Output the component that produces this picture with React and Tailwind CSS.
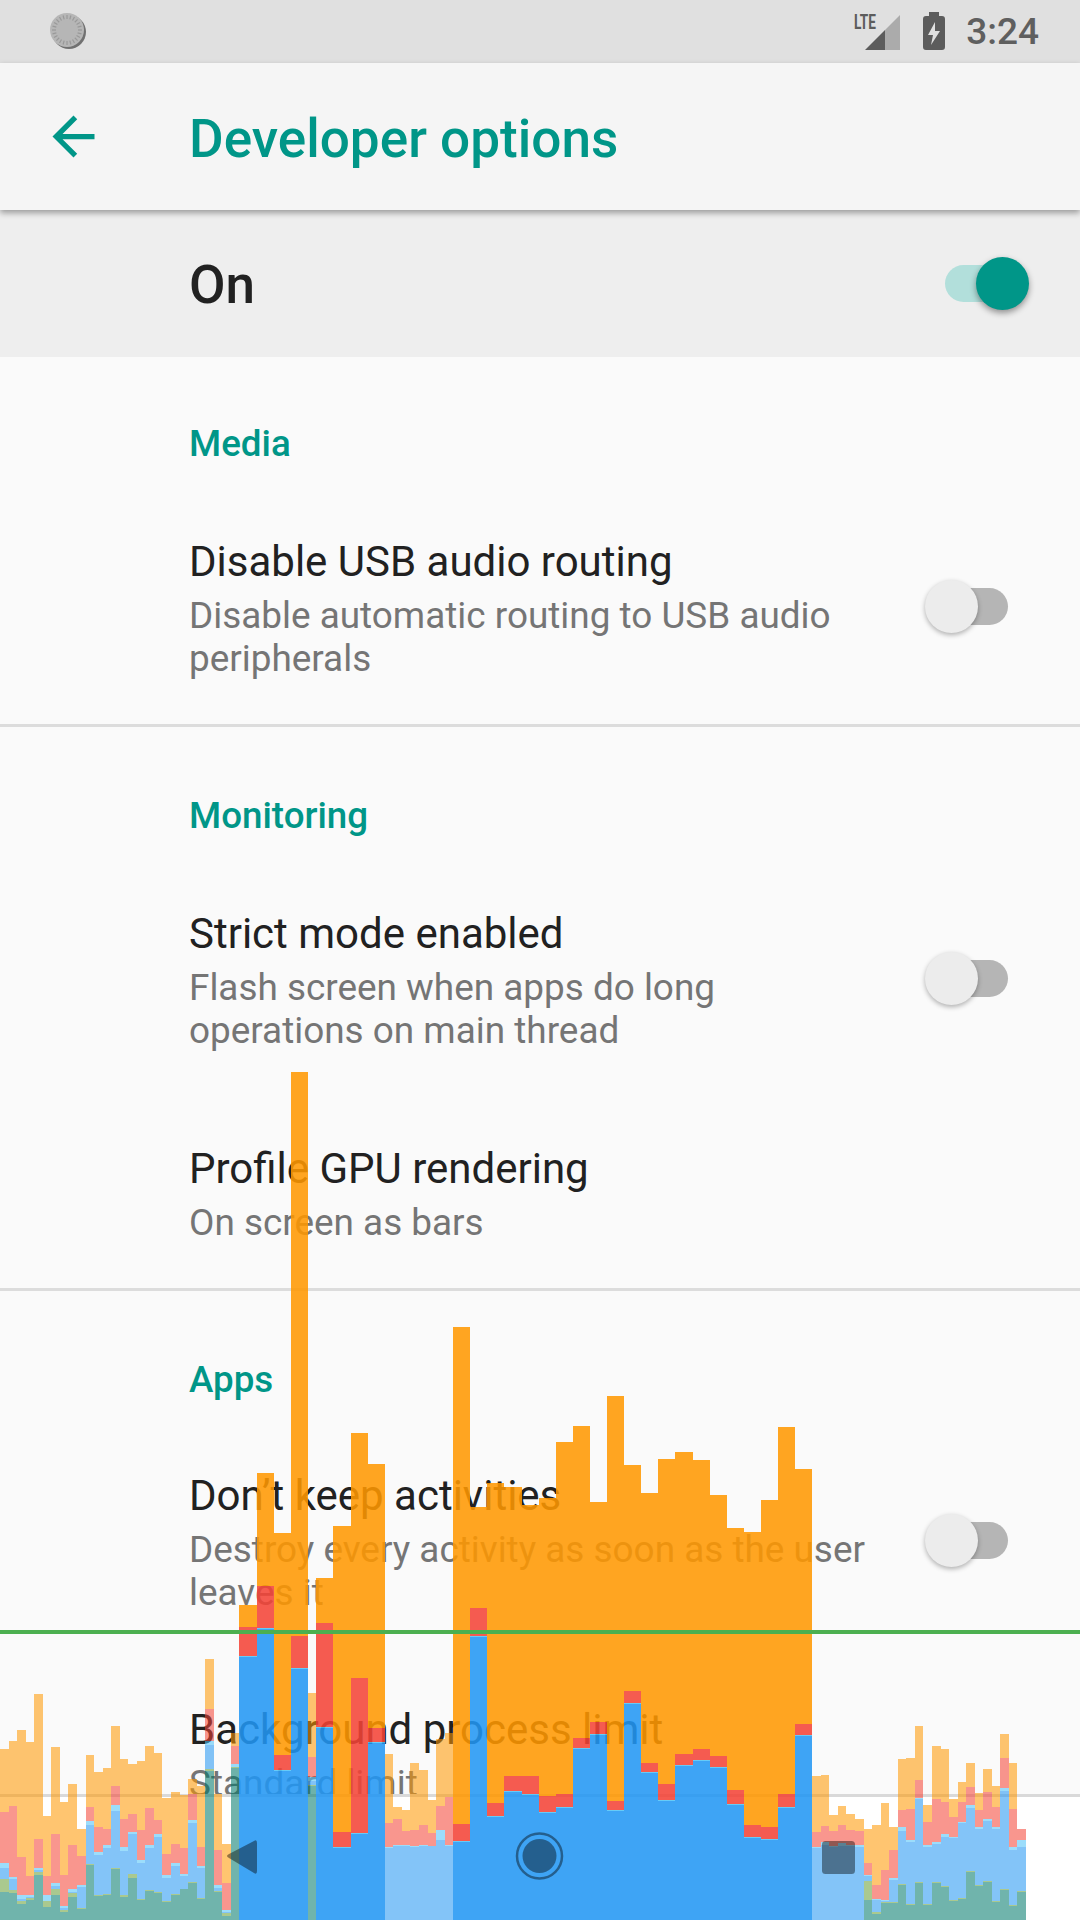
// Android "Developer options" screen with the Profile GPU rendering bars on top
const SLOT = 8.55;
const BASE = 1600; // all bar tops below are px offsets from this y
const BOTTOM = 320;

// [orange, red, sliver, blue, lime, teal] tops, faded frames
const LIGHT_RUNS = [
  [0, [
    [149, 212, 263, 268, 279, 292], [141, 206, 277, 279, 290, 293], [130, 257, 295, 299, 301, 304],
    [142, 276, 295, 297, 298, 300], [94, 239, 268, 270, 272, 275], [216, 276, 295, 301, 301, 307],
    [147, 234, 283, 286, 289, 295], [202, 275, 306, 308, 310, 312], [184, 245, 289, 292, 293, 297],
    [229, 256, 285, 287, 308, 309], [155, 207, 221, 225, 264, 265], [172, 227, 252, 255, 295, 296],
    [168, 229, 245, 248, 294, 295], [126, 186, 205, 211, 268, 269], [159, 219, 247, 251, 295, 297],
    [164, 214, 232, 234, 274, 278], [161, 230, 260, 263, 299, 300], [146, 208, 245, 248, 290, 291],
    [153, 220, 234, 237, 292, 293], [198, 254, 275, 278, 301, 302], [192, 244, 263, 266, 294, 295],
    [195, 248, 274, 276, 289, 289], [179, 194, 220, 223, 282, 283], [186, 247, 266, 268, 298, 299],
    [59, 109, 141, 145, 169, 171], [194, 250, 285, 288, 291, 292], [244, 283, 310, 312, 313, 316],
    [133, 146, 164, 167, 167, 168],
  ]],
  [36, [[93, 157, 177, 181, 185, 186]]],
  [45, [
    [154, 223, 247, 248, 320, 320], [207, 219, 245, 246, 320, 320], [210, 231, 245, 246, 320, 320],
    [163, 230, 246, 247, 320, 320], [170, 225, 245, 246, 320, 320], [200, 233, 246, 246, 320, 320],
    [139, 206, 230, 240, 320, 320], [133, 197, 245, 246, 320, 320],
  ]],
  [95, [
    [176, 232, 247, 248, 320, 320], [175, 226, 242, 245, 320, 320], [215, 231, 246, 247, 320, 320],
    [206, 225, 243, 246, 320, 320], [214, 230, 245, 246, 320, 320], [219, 231, 245, 247, 320, 320],
    [229, 263, 275, 276, 281, 300], [225, 285, 299, 300, 312, 314], [203, 270, 300, 301, 302, 303],
    [227, 250, 278, 280, 302, 303], [159, 210, 227, 231, 284, 285], [158, 209, 240, 242, 304, 305],
    [126, 180, 198, 199, 282, 283], [205, 222, 245, 247, 304, 305], [146, 199, 242, 244, 282, 283],
    [149, 202, 234, 237, 286, 287], [199, 217, 237, 238, 300, 301], [182, 202, 222, 223, 298, 299],
    [163, 187, 205, 208, 271, 272], [193, 210, 227, 229, 285, 286], [169, 192, 219, 221, 281, 282],
    [186, 207, 227, 229, 301, 302], [134, 158, 188, 191, 289, 290], [163, 209, 247, 250, 305, 306],
    [229, 229, 240, 247, 291, 292],
  ]],
];

// [slot, orange, red, blue] tops, solid double-width frames
const SOLID_BARS = [
  [28, 5, 27, 56], [30, -127, -14, 28], [32, -67, 155, 170], [34, -528, 36, 68],
  [37, -22, 23, 127], [39, -74, 232, 247], [41, -167, 78, 233], [43, -136, 128, 142],
  [53, -273, 224, 241], [55, -93, 8, 36], [57, -117, 203, 216], [59, -113, 176, 191],
  [61, -95, 176, 194], [63, -102, 196, 212], [65, -158, 194, 207], [67, -174, 138, 148],
  [69, -98, 122, 134], [71, -204, 201, 210], [73, -135, 91, 103], [75, -107, 163, 172],
  [77, -141, 184, 200], [79, -148, 154, 165], [81, -140, 149, 160], [83, -105, 156, 167],
  [85, -72, 190, 204], [87, -68, 225, 237], [89, -100, 227, 239], [91, -173, 194, 207],
  [93, -131, 124, 135],
];

const COLORS = ["#FF9800", "#F44336", "#4FC3F7", "#2196F3", "#689F38", "#00796B"];

function Stack({ slot, span, tops, opacity }) {
  return tops.map((top, i) => {
    const next = i + 1 < tops.length ? tops[i + 1] : BOTTOM;
    if (next <= top) return null;
    return (
      <rect
        key={i}
        x={slot * SLOT}
        y={BASE + top}
        width={span * SLOT}
        height={next - top}
        fill={COLORS[i]}
        fillOpacity={opacity}
      />
    );
  });
}

function GpuBars() {
  return (
    <svg
      className="absolute left-0 top-0 pointer-events-none"
      width="1080"
      height="1920"
      viewBox="0 0 1080 1920"
      shapeRendering="crispEdges"
    >
      {LIGHT_RUNS.map(([start, rows]) =>
        rows.map((tops, i) => (
          <Stack key={start + i} slot={start + i} span={1} tops={tops} opacity={0.56} />
        ))
      )}
      {SOLID_BARS.map(([slot, orange, red, blue]) => (
        <g key={slot}>
          <rect x={slot * SLOT} y={BASE + orange} width={2 * SLOT} height={red - orange} fill="#FF9800" fillOpacity={0.87} />
          <rect x={slot * SLOT} y={BASE + red} width={2 * SLOT} height={blue - red} fill="#F44336" fillOpacity={0.87} />
          <rect x={slot * SLOT} y={BASE + blue} width={2 * SLOT} height={1} fill="#4FC3F7" fillOpacity={0.87} />
          <rect x={slot * SLOT} y={BASE + blue + 1} width={2 * SLOT} height={BOTTOM - blue - 1} fill="#2196F3" fillOpacity={0.87} />
        </g>
      ))}
      <rect x="0" y="1630" width="1080" height="4" fill="#4CAF50" />
    </svg>
  );
}

function NavIcons() {
  return (
    <div className="absolute left-0 bottom-0 w-full h-[126px] pointer-events-none">
      <svg width="1080" height="126" viewBox="0 0 1080 126" fill="#000" fillOpacity="0.42">
        <path d="M254 47L229 60Q225 62 229 64L254 79Q257 81 257 77V49Q257 45 254 47Z" />
        <circle cx="539.5" cy="62" r="17" />
        <circle cx="539.5" cy="62" r="22.5" fill="none" stroke="#000" strokeOpacity="0.42" strokeWidth="2.5" />
        <rect x="822" y="47" width="33" height="33" rx="3.5" />
      </svg>
    </div>
  );
}

function StatusBar() {
  const ticks = Array.from({ length: 24 }, (_, i) => i * 15);
  return (
    <div className="h-[63px] shrink-0 bg-[#e0e0e0] flex items-center justify-between">
      <svg width="120" height="63" viewBox="0 0 120 63">
        <circle cx="69" cy="32" r="17" fill="#555" opacity="0.8" />
        <circle cx="67" cy="30" r="17" fill="#b6b6b6" />
        {ticks.map((deg) => (
          <line key={deg} x1="67" y1="15" x2="67" y2="19" stroke="#999" strokeWidth="1.2" transform={`rotate(${deg} 67 30)`} />
        ))}
      </svg>
      <div className="flex items-center">
        <svg width="110" height="63" viewBox="0 0 110 63" className="shrink-0">
          <text x="4" y="29" fontFamily="Roboto, sans-serif" fontWeight="700" fontSize="21" fill="#5c5c5c" textLength="22" lengthAdjust="spacingAndGlyphs">LTE</text>
          <path d="M15 50L35 30V50Z" fill="#5c5c5c" />
          <path d="M35 30L50 15V50H35Z" fill="#ababab" />
          <path d="M79 16H89V12H79ZM73 19Q73 16 76 16H92Q95 16 95 19V47Q95 50 92 50H76Q73 50 73 47Z" fill="#5c5c5c" />
          <path d="M85 22L78 35H83L81 45L90 31H85Z" fill="#e0e0e0" />
        </svg>
        <span className="ml-[6px] mr-[41px] text-[37px] leading-[63px] font-medium text-[#5f5f5f]">3:24</span>
      </div>
    </div>
  );
}

function Toolbar() {
  return (
    <div className="relative z-10 h-[147px] shrink-0 bg-[#f5f5f5] flex items-center shadow-[0_3px_6px_rgba(0,0,0,0.35)]">
      <svg width="63" height="63" viewBox="0 0 24 24" fill="#009688" className="ml-[42px] shrink-0">
        <path d="M20 11H7.83l5.59-5.59L12 4l-8 8 8 8 1.41-1.41L7.83 13H20v-2z" />
      </svg>
      <h1 className="ml-[84px] mt-[4px] text-[53.1px] leading-[60px] font-medium text-[#009688]">Developer options</h1>
    </div>
  );
}

function Switch({ on }) {
  if (on) {
    return (
      <div className="relative w-[84px] h-[53px] shrink-0 flex items-center">
        <div className="w-[78px] h-[37px] rounded-full bg-[#b2dfdb]" />
        <div className="absolute right-0 top-0 w-[53px] h-[53px] rounded-full bg-[#009688] shadow-[0_3px_6px_rgba(0,0,0,0.4)]" />
      </div>
    );
  }
  return (
    <div className="relative w-[83px] h-[53px] mb-[4px] shrink-0 flex items-center justify-end">
      <div className="w-[78px] h-[37px] rounded-full bg-[#b5b5b5]" />
      <div className="absolute left-0 top-0 w-[53px] h-[53px] rounded-full bg-[#ececec] shadow-[0_2px_5px_rgba(0,0,0,0.3)]" />
    </div>
  );
}

function Row({ title, lines, toggle, pb = "pb-[44px]" }) {
  return (
    <div className={`flex items-center pt-[48px] ${pb} pl-[189px] pr-[72px]`}>
      <div className="flex-1">
        <div className="text-[42px] leading-[50px] text-[#212121]">{title}</div>
        <div className="mt-[7px] text-[36.9px] leading-[43px] text-[#757575]">
          {lines.map((line) => (
            <div key={line}>{line}</div>
          ))}
        </div>
      </div>
      {toggle && <Switch />}
    </div>
  );
}

function Section({ label, children, divider, head = "pt-[68px] pb-[24px]" }) {
  return (
    <section className={divider ? "border-b-[3px] border-[#dcdcdc]" : ""}>
      <h2 className={`${head} pl-[189px] text-[36.75px] leading-[43px] font-medium text-[#009688]`}>{label}</h2>
      {children}
    </section>
  );
}

export default function App() {
  return (
    <div className="relative w-[1080px] h-[1920px] overflow-hidden flex flex-col bg-[#fafafa] font-['Roboto',sans-serif]">
      <StatusBar />
      <Toolbar />
      <div className="h-[147px] shrink-0 bg-[#eeeeee] flex items-center justify-between pl-[189px] pr-[51px]">
        <span className="mt-[2px] text-[53px] leading-[60px] font-medium text-[#212121]">On</span>
        <Switch on />
      </div>
      <div className="flex-1 min-h-0 overflow-hidden">
        <Section label="Media" divider head="pt-[65px] pb-[24px]">
          <Row title="Disable USB audio routing" lines={["Disable automatic routing to USB audio", "peripherals"]} toggle />
        </Section>
        <Section label="Monitoring" divider head="pt-[67px] pb-[24px]">
          <Row title="Strict mode enabled" lines={["Flash screen when apps do long", "operations on main thread"]} toggle />
          <Row title="Profile GPU rendering" lines={["On screen as bars"]} />
        </Section>
        <Section label="Apps" head="pt-[67px] pb-[22px]">
          <Row title="Don’t keep activities" lines={["Destroy every activity as soon as the user", "leaves it"]} toggle pb="pb-[43px]" />
          <Row title="Background process limit" lines={["Standard limit"]} />
        </Section>
      </div>
      <div className="h-[126px] shrink-0 bg-white border-t-[3px] border-[#d9d9d9]" />
      <GpuBars />
      <NavIcons />
    </div>
  );
}
